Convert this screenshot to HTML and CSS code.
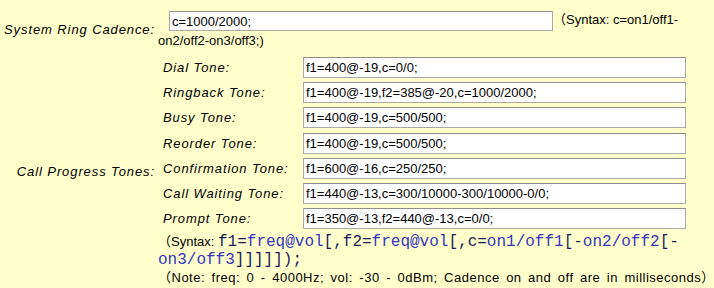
FILE: index.html
```html
<!DOCTYPE html>
<html>
<head>
<meta charset="utf-8">
<link rel="stylesheet" href="styles.css">
</head>
<body>

<!-- Tone settings -->
<div class="settings">

  <div class="label">System Ring Cadence:</div>
  <div class="value">
    <input class="ring" type="text" value="c=1000/2000;"><span class="hint">（Syntax: c=on1/off1-on2/off2-on3/off3;)</span>
  </div>

  <div class="label">Call Progress Tones:</div>
  <div class="value">
    <div class="tones">
      <div class="sublabel">Dial Tone:</div>
      <input class="tone" type="text" value="f1=400@-19,c=0/0;">
      <div class="sublabel">Ringback Tone:</div>
      <input class="tone" type="text" value="f1=400@-19,f2=385@-20,c=1000/2000;">
      <div class="sublabel">Busy Tone:</div>
      <input class="tone" type="text" value="f1=400@-19,c=500/500;">
      <div class="sublabel">Reorder Tone:</div>
      <input class="tone" type="text" value="f1=400@-19,c=500/500;">
      <div class="sublabel">Confirmation Tone:</div>
      <input class="tone" type="text" value="f1=600@-16,c=250/250;">
      <div class="sublabel">Call Waiting Tone:</div>
      <input class="tone" type="text" value="f1=440@-13,c=300/10000-300/10000-0/0;">
      <div class="sublabel">Prompt Tone:</div>
      <input class="tone" type="text" value="f1=350@-13,f2=440@-13,c=0/0;">
    </div>
    <div class="syntax">（Syntax: <code>f1=<var>freq@vol</var>[,f2=<var>freq@vol</var>[,c=<var>on1/off1</var>[-<var>on2/off2</var>[-<var>on3/off3</var>]]]]]);</code></div>
    <div class="note">（Note: freq: 0 - 4000Hz; vol: -30 - 0dBm; Cadence on and off are in milliseconds）</div>
  </div>

</div>

</body>
</html>
```

FILE: styles.css
```css
body {
    margin: 0;
    background-color: #ffffcc;
    font-family: "Liberation Sans", "Noto Sans CJK JP", sans-serif;
    font-size: 13px;
    color: #000;
}

/* two columns: caption and value */
.settings {
    display: grid;
    grid-template-columns: 155px 552px;
    column-gap: 3px;
    row-gap: 8px;
    padding-top: 10px;
}

.label {
    align-self: center;
    text-align: right;
    font-style: italic;
    letter-spacing: 0.9px;
}

.value {
    line-height: 17px;
}

input {
    box-sizing: border-box;
    margin: 0;
    padding: 0 2px;
    border: 1px solid #a9a9a9;
    border-top-color: #8f8f8f;
    background: #fff;
    font-family: "Liberation Sans", sans-serif;
    font-size: 13px;
    color: #000;
}

.ring {
    width: 384px;
    height: 20px;
    margin: 1px 0 1px 11px;
    vertical-align: middle;
}

/* nested list of tones */
.tones {
    display: grid;
    grid-template-columns: 145px 383px;
    row-gap: 4.2px;
    margin-bottom: 4px;
}

.sublabel {
    align-self: center;
    padding-left: 5px;
    font-style: italic;
    letter-spacing: 0.9px;
}

.tone {
    width: 383px;
    height: 21px;
}

.note {
    letter-spacing: 0.5px;
    word-spacing: 2.4px;
}

code {
    font-family: "Liberation Mono", monospace;
    font-size: 16px;
    color: #1c1c5a;
}

var {
    font-style: normal;
    color: #3434c0;
}
```
